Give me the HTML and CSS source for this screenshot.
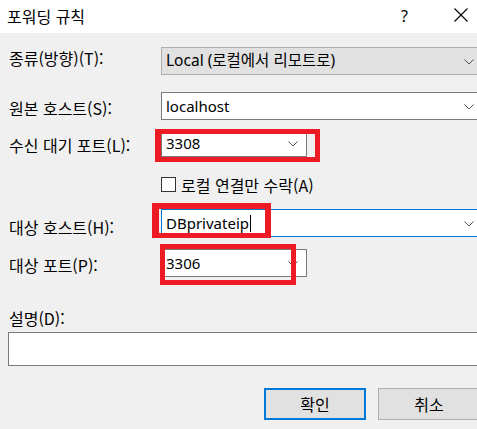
FILE: index.html
```html
<!DOCTYPE html>
<html lang="ko">
<head>
<meta charset="utf-8">
<link rel="stylesheet" href="styles.css">
</head>
<body>
<div class="dialog">
  <div class="titlebar">
    <span class="title">포워딩 규칙</span>
    <span class="help">?</span>
    <span class="close"><svg width="14" height="14" viewBox="0 0 14 14"><path d="M0.5 0.5 L13.5 13.5 M13.5 0.5 L0.5 13.5" stroke="#000" stroke-width="1.1" fill="none"/></svg></span>
  </div>
  <div class="form">
    <div class="row r1">
      <label class="lbl">종류(방향)(T):</label>
      <div class="field combo wide gray"><span class="val">Local (로컬에서 리모트로)</span><svg class="chev" width="10" height="6" viewBox="0 0 10 6"><polyline points="0.5,0.5 5,5 9.5,0.5" fill="none" stroke="#555" stroke-width="1"/></svg></div>
    </div>
    <div class="row r2">
      <label class="lbl low">원본 호스트(S):</label>
      <div class="field combo wide"><span class="val">localhost</span><svg class="chev" width="10" height="6" viewBox="0 0 10 6"><polyline points="0.5,0.5 5,5 9.5,0.5" fill="none" stroke="#555" stroke-width="1"/></svg></div>
    </div>
    <div class="row r3">
      <label class="lbl low">수신 대기 포트(L):</label>
      <div class="field combo short"><span class="val">3308</span><svg class="chev" width="10" height="6" viewBox="0 0 10 6"><polyline points="0.5,0.5 5,5 9.5,0.5" fill="none" stroke="#555" stroke-width="1"/></svg><div class="mark m1"></div></div>
    </div>
    <div class="row r4">
      <span class="spacer"></span>
      <span class="check"></span><span class="checklbl">로컬 연결만 수락(A)</span>
    </div>
    <div class="row r5">
      <label class="lbl low2">대상 호스트(H):</label>
      <div class="field combo wide focus"><span class="val">DBprivateip</span><span class="caret"></span><svg class="chev" width="10" height="6" viewBox="0 0 10 6"><polyline points="0.5,0.5 5,5 9.5,0.5" fill="none" stroke="#555" stroke-width="1"/></svg><div class="mark m2"></div></div>
    </div>
    <div class="row r6">
      <label class="lbl low">대상 포트(P):</label>
      <div class="field combo short"><span class="val">3306</span><svg class="chev" width="10" height="6" viewBox="0 0 10 6"><polyline points="0.5,0.5 5,5 9.5,0.5" fill="none" stroke="#555" stroke-width="1"/></svg><div class="mark m3"></div></div>
    </div>
    <div class="desclbl">설명(D):</div>
    <div class="desc"></div>
    <div class="buttons">
      <button class="btn default">확인</button>
      <button class="btn">취소</button>
    </div>
  </div>
</div>
</body>
</html>
```
FILE: styles.css
```css
html, body {
  margin: 0;
  padding: 0;
}
body {
  width: 477px;
  height: 429px;
  overflow: hidden;
  background: #f0f0f0;
  font-family: "Noto Sans", "Noto Sans CJK KR", sans-serif;
  font-size: 15px;
  color: #000;
}
.dialog {
  width: 477px;
  height: 429px;
  overflow: hidden;
}
.titlebar {
  height: 33px;
  background: #fff;
  display: flex;
  align-items: center;
  position: relative;
}
.title {
  margin-left: 7px;
  font-size: 16px;
  font-family: "Noto Sans CJK KR", sans-serif;
  margin-top: -2px;
}
.help {
  margin-left: auto;
  width: 8px;
  font-size: 16px;
  margin-top: -2px;
}
.close {
  display: flex;
  margin-left: 45px;
  margin-right: 9px;
  margin-top: -3px;
}
.form {
  padding-left: 9px;
}
.row {
  display: flex;
  align-items: center;
  height: 28px;
}
.lbl {
  box-sizing: border-box;
  width: 152px;
  flex: none;
  font-family: "Noto Sans CJK KR", sans-serif;
  font-size: 16px;
  line-height: 20px;
  white-space: nowrap;
}
.lbl.low { padding-top: 4px; }
.lbl.low2 { padding-top: 8px; }
.r1 { margin-top: 14px; }
.r1 .lbl { padding-bottom: 6px; }
.r2 { margin-top: 17px; }
.r3 { margin-top: 9px; }
.r4 { margin-top: 20px; height: 15px; }
.r5 { margin-top: 17px; }
.r6 { margin-top: 12px; }
.field {
  position: relative;
  box-sizing: border-box;
  height: 28px;
  background: #fff;
  border: 1px solid #7a7a7a;
  display: flex;
  align-items: center;
  padding-left: 4px;
  flex: none;
}
.field.wide { width: 322px; }
.field.short { width: 146px; }
.field.gray {
  background: #e1e1e1;
  border-color: #adadad;
}
.field.focus {
  border-color: #0078d7;
}
.val {
  white-space: nowrap;
  line-height: 1;
}
.gray .val {
  font-size: 15.5px;
}
.caret {
  display: inline-block;
  width: 1px;
  height: 17px;
  background: #000;
  margin-left: 1px;
}
.chev {
  position: absolute;
  right: 8px;
  top: 11px;
}
.spacer {
  width: 152px;
  flex: none;
}
.check {
  box-sizing: border-box;
  width: 15px;
  height: 15px;
  border: 1px solid #333;
  background: #fff;
  flex: none;
}
.checklbl {
  margin-left: 5px;
  font-family: "Noto Sans CJK KR", sans-serif;
  font-size: 16px;
  line-height: 20px;
  white-space: nowrap;
}
.mark {
  position: absolute;
  box-sizing: border-box;
  border-style: solid;
  border-color: #ed1c24;
}
.m1 {
  left: -7px;
  top: -1px;
  width: 165px;
  height: 33px;
  border-width: 5px 5px 5px 6px;
}
.m2 {
  left: -10px;
  top: -7px;
  width: 119px;
  height: 35px;
  border-width: 6px 6px 5px 7px;
}
.m3 {
  left: -2px;
  top: -6px;
  width: 136px;
  height: 41px;
  border-width: 5px;
}
.desclbl {
  margin-top: 31px;
  height: 20px;
  line-height: 20px;
  font-family: "Noto Sans CJK KR", sans-serif;
  font-size: 16px;
}
.desc {
  margin-top: 4px;
  margin-left: -1px;
  box-sizing: border-box;
  width: 480px;
  height: 34px;
  background: #fff;
  border: 1px solid #7a7a7a;
}
.buttons {
  display: flex;
  gap: 12px;
  margin-top: 22px;
  padding-left: 255px;
}
.btn {
  box-sizing: border-box;
  width: 102px;
  height: 32px;
  flex: none;
  background: #e1e1e1;
  border: 1px solid #adadad;
  font-family: "Noto Sans CJK KR", sans-serif;
  font-size: 16px;
  color: #000;
  padding: 0;
}
.btn.default {
  border: 2px solid #0078d7;
}
```
